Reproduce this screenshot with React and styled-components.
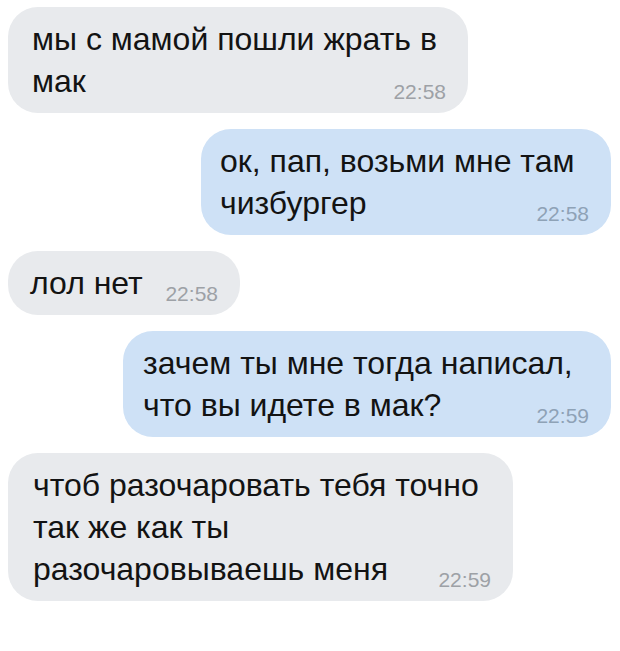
import React from "react";
import styled, { createGlobalStyle } from "styled-components";

const Global = createGlobalStyle`
  html, body { margin: 0; padding: 0; background: #ffffff; }
  body { font-family: "Liberation Sans", Arial, sans-serif; }
`;

const Chat = styled.div`
  width: 620px;
  height: 651px;
  box-sizing: border-box;
  padding: 7px 9px 0 8px;
  display: flex;
  flex-direction: column;
  gap: 16px;
  background: #ffffff;
`;

const Bubble = styled.div`
  align-self: ${(p) => (p.$out ? "flex-end" : "flex-start")};
  width: ${(p) => p.$w}px;
  box-sizing: border-box;
  padding: 11px 22px 11px ${(p) => p.$pl}px;
  border-radius: 30px;
  background: ${(p) => (p.$out ? "#cee1f6" : "#e8eaed")};
  color: #131313;
  font-size: 32px;
  line-height: 42px;
  white-space: nowrap;
  display: flow-root;
`;

const Time = styled.span`
  float: right;
  margin-top: 22px;
  font-size: 21px;
  line-height: 20px;
  color: ${(p) => (p.$out ? "#8ea2b6" : "#9da1a6")};
`;

const messages = [
  { out: false, w: 460, pl: 24, lines: ["мы с мамой пошли жрать в", "мак"], time: "22:58" },
  { out: true, w: 410, pl: 19, lines: ["ок, пап, возьми мне там", "чизбургер"], time: "22:58" },
  { out: false, w: 232, pl: 22, lines: ["лол нет"], time: "22:58" },
  { out: true, w: 488, pl: 20, lines: ["зачем ты мне тогда написал,", "что вы идете в мак?"], time: "22:59" },
  {
    out: false,
    w: 505,
    pl: 25,
    lines: ["чтоб разочаровать тебя точно", "так же как ты", "разочаровываешь меня"],
    time: "22:59",
  },
];

export default function App() {
  return (
    <>
      <Global />
      <Chat>
        {messages.map((m, i) => (
          <Bubble key={i} $out={m.out} $w={m.w} $pl={m.pl}>
            {m.lines.map((line, j) => (
              <React.Fragment key={j}>
                {j === m.lines.length - 1 && <Time $out={m.out}>{m.time}</Time>}
                {line}
                {j < m.lines.length - 1 && <br />}
              </React.Fragment>
            ))}
          </Bubble>
        ))}
      </Chat>
    </>
  );
}
